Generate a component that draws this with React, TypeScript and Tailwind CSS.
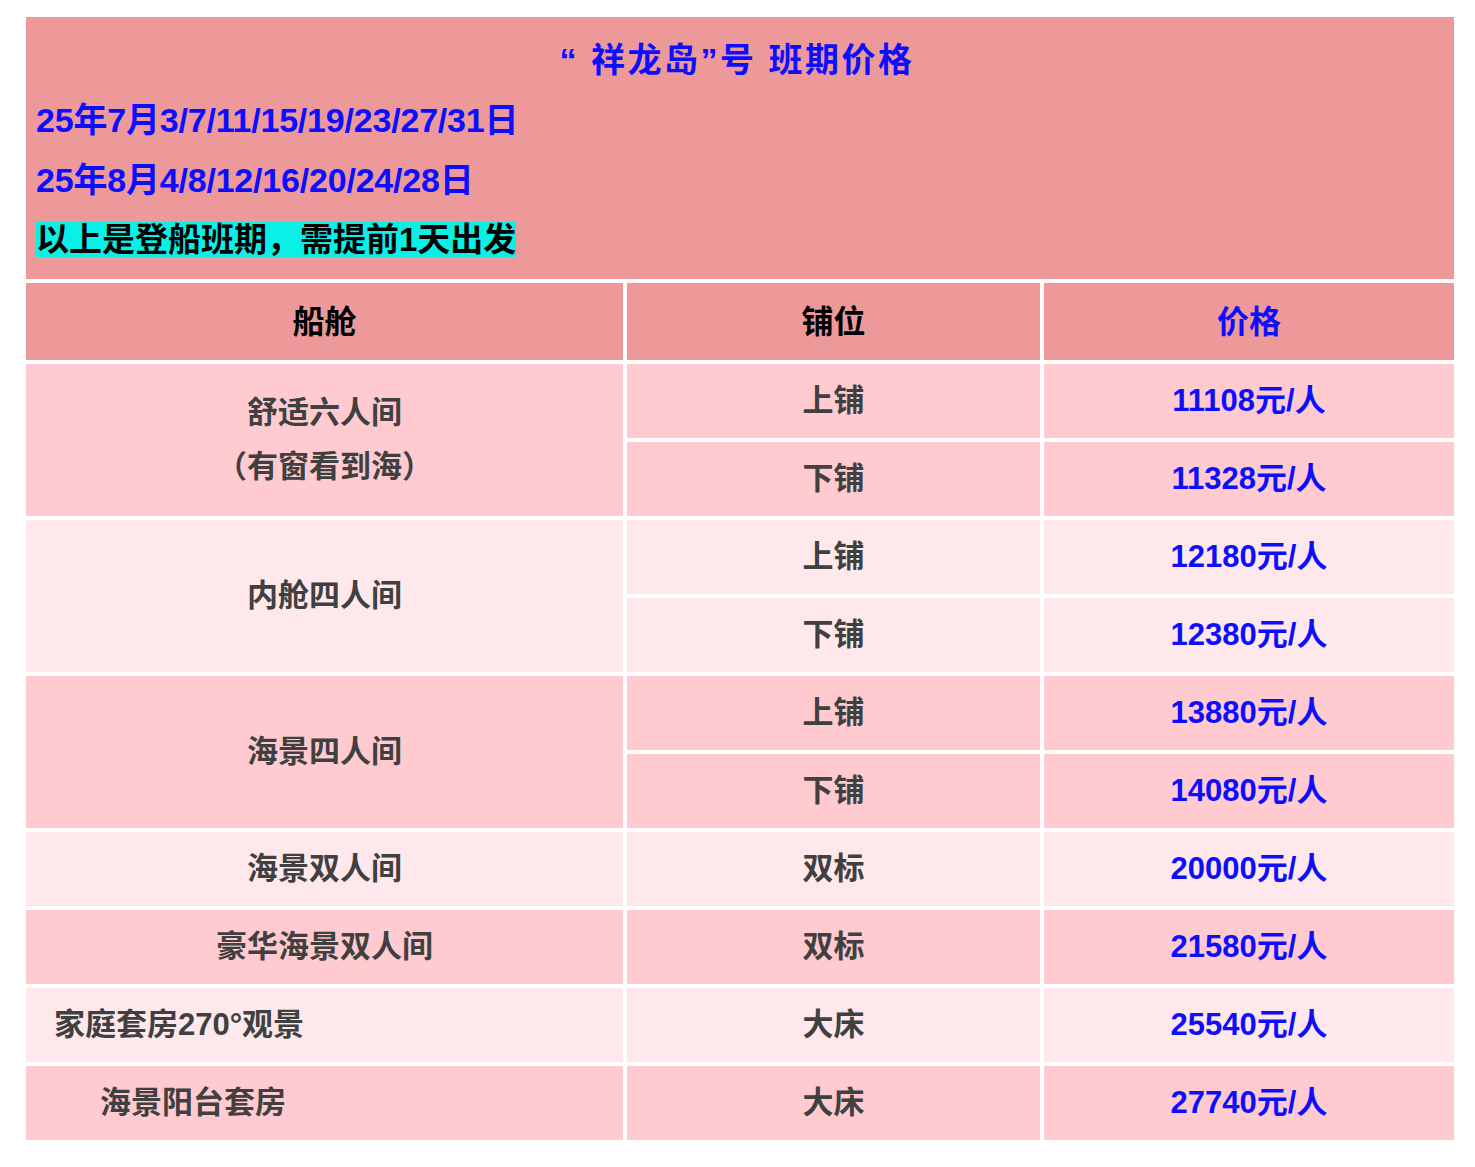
import React from 'react';

const font = { fontFamily: '"Liberation Sans", "Noto Sans CJK SC", sans-serif' };

const dark = 'bg-[#ffcad0]';
const light = 'bg-[#ffe8eb]';

type Row = { berth: string; price: string; bg: string };

const rows: Row[] = [
  { berth: '上铺', price: '11108元/人', bg: dark },
  { berth: '下铺', price: '11328元/人', bg: dark },
  { berth: '上铺', price: '12180元/人', bg: light },
  { berth: '下铺', price: '12380元/人', bg: light },
  { berth: '上铺', price: '13880元/人', bg: dark },
  { berth: '下铺', price: '14080元/人', bg: dark },
  { berth: '双标', price: '20000元/人', bg: light },
  { berth: '双标', price: '21580元/人', bg: dark },
  { berth: '大床', price: '25540元/人', bg: light },
  { berth: '大床', price: '27740元/人', bg: dark },
];

const cell = 'flex items-center justify-center text-[31px] font-bold';

export default function App() {
  return (
    <div className="min-h-screen bg-white pt-[17px] pl-[26px]" style={font}>
      <div className="w-[1428px]">
        {/* header block */}
        <div className="bg-[#ed9999] pt-[13px] pb-[11px] font-bold">
          <div className="pr-[6px] text-center text-[34px] leading-[60px] tracking-[2.5px] text-[#0d0dff]">“ 祥龙岛”号 班期价格</div>
          <div className="pl-[10px] text-[34px] leading-[60px] tracking-[-0.2px] text-[#0d0dff]">25年7月3/7/11/15/19/23/27/31日</div>
          <div className="pl-[10px] text-[34px] leading-[60px] tracking-[-0.2px] text-[#0d0dff]">25年8月4/8/12/16/20/24/28日</div>
          <div className="flex h-[58px] items-center pl-[10px]">
            <span className="bg-[#0af0e6] text-[33px] leading-[35px] text-black">以上是登船班期，需提前1天出发</span>
          </div>
        </div>

        {/* price table */}
        <div className="mt-[4px] grid grid-cols-[597px_413px_410px] grid-rows-[77px_repeat(10,74px)] gap-[4px]">
          <div className={`${cell} bg-[#ed9999] text-[32px] text-black`}>船舱</div>
          <div className={`${cell} bg-[#ed9999] text-[32px] text-black`}>铺位</div>
          <div className={`${cell} bg-[#ed9999] text-[32px] text-[#0d0dff]`}>价格</div>

          <div className={`${dark} row-span-2 flex flex-col items-center justify-center text-[31px] font-bold leading-[54px] text-[#404040]`}>
            <span>舒适六人间</span>
            <span>（有窗看到海）</span>
          </div>
          <div className={`${cell} ${rows[0].bg} text-[#404040]`}>{rows[0].berth}</div>
          <div className={`${cell} ${rows[0].bg} text-[#0d0dff]`}>{rows[0].price}</div>
          <div className={`${cell} ${rows[1].bg} text-[#404040]`}>{rows[1].berth}</div>
          <div className={`${cell} ${rows[1].bg} text-[#0d0dff]`}>{rows[1].price}</div>

          <div className={`${cell} ${light} row-span-2 text-[#404040]`}>内舱四人间</div>
          <div className={`${cell} ${rows[2].bg} text-[#404040]`}>{rows[2].berth}</div>
          <div className={`${cell} ${rows[2].bg} text-[#0d0dff]`}>{rows[2].price}</div>
          <div className={`${cell} ${rows[3].bg} text-[#404040]`}>{rows[3].berth}</div>
          <div className={`${cell} ${rows[3].bg} text-[#0d0dff]`}>{rows[3].price}</div>

          <div className={`${cell} ${dark} row-span-2 text-[#404040]`}>海景四人间</div>
          <div className={`${cell} ${rows[4].bg} text-[#404040]`}>{rows[4].berth}</div>
          <div className={`${cell} ${rows[4].bg} text-[#0d0dff]`}>{rows[4].price}</div>
          <div className={`${cell} ${rows[5].bg} text-[#404040]`}>{rows[5].berth}</div>
          <div className={`${cell} ${rows[5].bg} text-[#0d0dff]`}>{rows[5].price}</div>

          <div className={`${cell} ${light} text-[#404040]`}>海景双人间</div>
          <div className={`${cell} ${rows[6].bg} text-[#404040]`}>{rows[6].berth}</div>
          <div className={`${cell} ${rows[6].bg} text-[#0d0dff]`}>{rows[6].price}</div>

          <div className={`${cell} ${dark} text-[#404040]`}>豪华海景双人间</div>
          <div className={`${cell} ${rows[7].bg} text-[#404040]`}>{rows[7].berth}</div>
          <div className={`${cell} ${rows[7].bg} text-[#0d0dff]`}>{rows[7].price}</div>

          <div className={`${light} flex items-center pl-[28px] text-[31px] font-bold text-[#404040]`}>家庭套房270°观景</div>
          <div className={`${cell} ${rows[8].bg} text-[#404040]`}>{rows[8].berth}</div>
          <div className={`${cell} ${rows[8].bg} text-[#0d0dff]`}>{rows[8].price}</div>

          <div className={`${dark} flex items-center pl-[74px] text-[31px] font-bold text-[#404040]`}>海景阳台套房</div>
          <div className={`${cell} ${rows[9].bg} text-[#404040]`}>{rows[9].berth}</div>
          <div className={`${cell} ${rows[9].bg} text-[#0d0dff]`}>{rows[9].price}</div>
        </div>
      </div>
    </div>
  );
}
